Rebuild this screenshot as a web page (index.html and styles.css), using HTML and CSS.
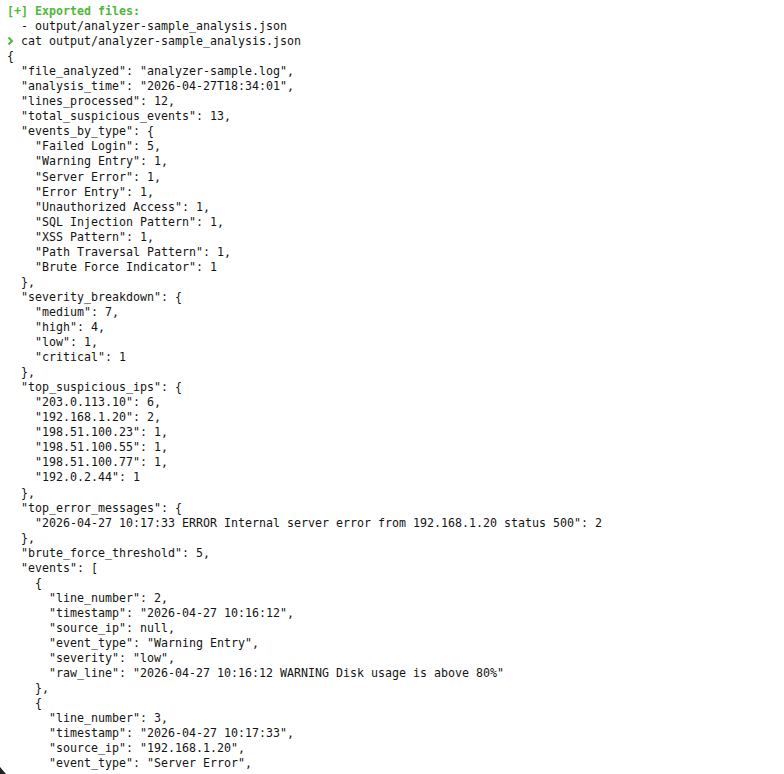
FILE: index.html
```html
<!DOCTYPE html>
<html lang="en">
<head>
<meta charset="utf-8">
<title>Terminal</title>
<link rel="stylesheet" href="styles.css">
</head>
<body>
<main class="terminal">
<pre class="out"><span class="ok">[+] Exported files:</span>
  - output/analyzer-sample_analysis.json
<span class="prompt"><svg class="chev" width="7" height="10" viewBox="0 0 7 10"><polyline points="1.5,1.5 5,5 1.5,8.5" fill="none" stroke="#4fb83a" stroke-width="2"/></svg></span> cat output/analyzer-sample_analysis.json
{
  "file_analyzed": "analyzer-sample.log",
  "analysis_time": "2026-04-27T18:34:01",
  "lines_processed": 12,
  "total_suspicious_events": 13,
  "events_by_type": {
    "Failed Login": 5,
    "Warning Entry": 1,
    "Server Error": 1,
    "Error Entry": 1,
    "Unauthorized Access": 1,
    "SQL Injection Pattern": 1,
    "XSS Pattern": 1,
    "Path Traversal Pattern": 1,
    "Brute Force Indicator": 1
  },
  "severity_breakdown": {
    "medium": 7,
    "high": 4,
    "low": 1,
    "critical": 1
  },
  "top_suspicious_ips": {
    "203.0.113.10": 6,
    "192.168.1.20": 2,
    "198.51.100.23": 1,
    "198.51.100.55": 1,
    "198.51.100.77": 1,
    "192.0.2.44": 1
  },
  "top_error_messages": {
    "2026-04-27 10:17:33 ERROR Internal server error from 192.168.1.20 status 500": 2
  },
  "brute_force_threshold": 5,
  "events": [
    {
      "line_number": 2,
      "timestamp": "2026-04-27 10:16:12",
      "source_ip": null,
      "event_type": "Warning Entry",
      "severity": "low",
      "raw_line": "2026-04-27 10:16:12 WARNING Disk usage is above 80%"
    },
    {
      "line_number": 3,
      "timestamp": "2026-04-27 10:17:33",
      "source_ip": "192.168.1.20",
      "event_type": "Server Error",</pre>
<svg class="corner" width="8" height="8" viewBox="0 0 8 8"><polygon points="0,1 6,8 0,8" fill="#222"/></svg>
</main>
</body>
</html>
```

FILE: styles.css
```css
html, body {
  margin: 0;
  padding: 0;
  background: #ffffff;
}

.terminal {
  position: relative;
  width: 784px;
  height: 774px;
  overflow: hidden;
  box-sizing: border-box;
  padding: 4px 0 0 7px;
}

.out {
  margin: 0;
  font-family: "DejaVu Sans Mono", "Liberation Mono", monospace;
  font-size: 11.64px;
  line-height: 15.04px;
  color: #141414;
  white-space: pre;
}

.ok {
  color: #4fb83a;
  font-weight: bold;
}

.prompt {
  display: inline-block;
  width: 7px;
}

.chev {
  display: inline-block;
  vertical-align: -1px;
}

.corner {
  position: absolute;
  left: 0;
  bottom: 0;
}
```
